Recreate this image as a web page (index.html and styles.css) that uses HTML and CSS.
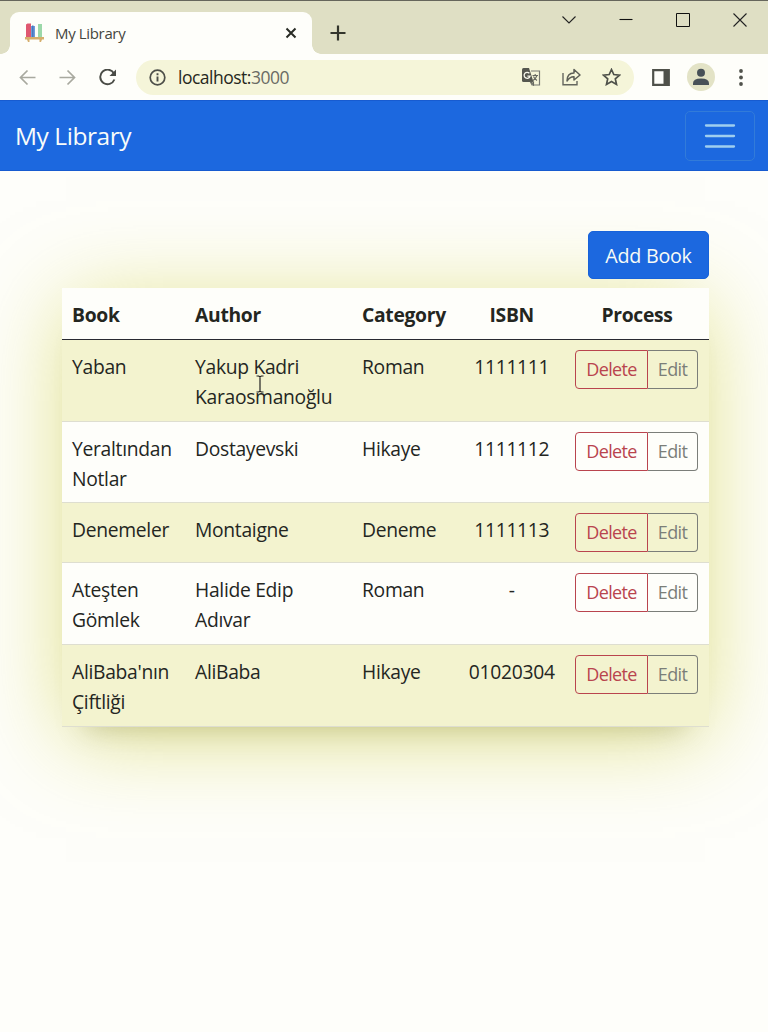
FILE: index.html
```html
<!DOCTYPE html>
<html lang="en">
<head>
<meta charset="utf-8">
<title>My Library</title>
<link rel="stylesheet" href="styles.css">
</head>
<body>
<header class="browser">
  <div class="tabstrip">
    <div class="tab">
      <svg class="favicon" width="20" height="20" viewBox="0 0 20 20"><path d="M1 1.500 2.500.5H6V14H1z" fill="#df5870"/><path d="M6 3h4v11H6z" fill="#6d9bdc"/><path d="M7 2.500h1.500V14H7z" fill="#4879bd"/><path d="M13 1h4v13h-4z" fill="#9bd8a9"/><path d="M0 14h19v2.500H0zM2 16.500h2.500V19H3zM14.500 16.500H17L16 19h-1.500z" fill="#d5ae6c"/></svg>
      <span class="tab-title">My Library</span>
      <svg width="12" height="12" viewBox="0 0 12 12"><path d="m1.500 1.500 9 9m0-9-9 9" stroke="#292c25" stroke-width="2"/></svg>
    </div>
    <svg class="new-tab" width="16" height="16" viewBox="0 0 16 16"><path d="M8 .5v15M.5 8h15" stroke="#33352c" stroke-width="2.200"/></svg>
    <div class="window-controls">
      <svg width="14" height="14" viewBox="0 0 14 14"><path d="m.5 3.500 6.500 6.500 6.500-6.500" fill="none" stroke="#222" stroke-width="1.100"/></svg>
      <svg width="14" height="14" viewBox="0 0 14 14"><path d="M.5 6.500h13" stroke="#111" stroke-width="1.100"/></svg>
      <svg width="14" height="14" viewBox="0 0 14 14"><path d="M.5.500h13v13H.5z" fill="none" stroke="#111"/></svg>
      <svg width="14" height="14" viewBox="0 0 14 14"><path d="m.5.500 13 13m0-13-13 13" stroke="#222" stroke-width="1.100"/></svg>
    </div>
  </div>
  <div class="toolbar">
    <div class="history">
      <svg width="17" height="17" viewBox="0 0 17 17"><path d="M16.500 8.500H1.500M8.500 1.500l-7 7 7 7" fill="none" stroke="#a8a99f" stroke-width="1.700"/></svg>
      <svg width="17" height="17" viewBox="0 0 17 17"><path d="M.5 8.500h15M8.500 1.500l7 7-7 7" fill="none" stroke="#a8a99f" stroke-width="1.700"/></svg>
      <svg width="17" height="17" viewBox="0 0 17 17"><path d="M15 4.500A7.300 7.300 0 1 0 15.400 10.500" fill="none" stroke="#4a4c46" stroke-width="1.900"/><path d="M17 .5v6.500h-6.500z" fill="#4a4c46"/></svg>
    </div>
    <div class="address">
      <svg width="17" height="17" viewBox="0 0 17 17"><circle cx="8.500" cy="8.500" r="7.300" fill="none" stroke="#4d4f49" stroke-width="1.700"/><path d="M8.500 7.500v5M8.500 4.300v1.900" stroke="#4d4f49" stroke-width="1.900"/></svg>
      <span class="url">localhost:<span>3000</span></span>
      <div class="address-actions">
        <svg width="19" height="18" viewBox="0 0 19 18"><path d="M9 3h8.500v14H10L8 13" fill="none" stroke="#777972" stroke-width="1.200"/><path d="M1.500 0H7l4.500 14h-10Q0 14 0 12.500v-11Q0 0 1.500 0z" fill="#55574f"/><path d="M7.400 5.300A3 3 0 1 0 8 8.200H5.400" fill="none" stroke="#f8f8ec" stroke-width="1.300"/><path d="M10.500 7.500H16M13.200 6v1.500M15 7.500q-1 3-4 5M11.500 8.500q1 2.500 3.500 4M9 14l2.500 3V14z" fill="none" stroke="#666860" stroke-width="1.100"/></svg>
        <svg width="19" height="18" viewBox="0 0 19 18"><path d="M1 5v11.700h14V13" fill="none" stroke="#65675f" stroke-width="1.400"/><path d="M5 13q0-8 7-8V1.500l6 5.500-6 5V8.800Q8 8.500 5 13z" fill="none" stroke="#5d5f57" stroke-width="1.500" stroke-linejoin="round"/></svg>
        <svg width="19" height="18" viewBox="0 0 19 18"><path d="m9.500 1.500 2.300 5 5.700.6-4.200 3.700 1.200 5.600-5-2.900-5 2.900 1.200-5.600-4.200-3.700 5.700-.6z" fill="none" stroke="#4f514a" stroke-width="1.700"/></svg>
      </div>
    </div>
    <div class="browser-actions">
      <svg width="18" height="17" viewBox="0 0 18 17"><path d="M1.200 1.200h15.600v14.600H1.200z" fill="none" stroke="#4f514a" stroke-width="2.200"/><path d="M11.500 1h5.500v15h-5.500z" fill="#4f514a"/></svg>
      <svg width="28" height="28" viewBox="0 0 28 28"><circle cx="14" cy="14" r="14" fill="#e3e3c6"/><circle cx="14" cy="9.700" r="4" fill="#475057"/><path d="M6 22v-1.800Q6 15.500 14 15.500t8 4.700V22z" fill="#475057"/></svg>
      <svg class="more" width="4" height="17" viewBox="0 0 4 17"><g fill="#50524c"><circle cx="2" cy="2" r="1.900"/><circle cx="2" cy="8.500" r="1.900"/><circle cx="2" cy="15" r="1.900"/></g></svg>
    </div>
  </div>
</header>
<nav class="navbar">
  <a class="brand">My Library</a>
  <button class="toggler" aria-label="Toggle navigation"><svg width="32" height="26" viewBox="0 0 32 26"><path d="M2 2.500h28M2 13h28M2 23.500h28" stroke="#9fceef" stroke-width="2.300" stroke-linecap="round"/></svg></button>
</nav>
<main class="content">
  <button class="add"><span>Add Book</span></button>
  <table class="books">
    <colgroup><col class="c-book"><col class="c-author"><col class="c-category"><col class="c-isbn"><col class="c-process"></colgroup>
    <thead><tr><th>Book</th><th>Author</th><th>Category</th><th class="center">ISBN</th><th class="center">Process</th></tr></thead>
    <tbody>
      <tr><td>Yaban</td><td class="pointed">Yakup Kadri<br>Karaosmanoğlu<svg class="cursor" width="8" height="18" viewBox="0 0 8 18"><path d="M.5 1h2.200L4 2l1.300-1h2.200M4 2v14M.5 17h2.200L4 16l1.300 1h2.200" fill="none" stroke="#222" stroke-width="1.200"/></svg></td><td>Roman</td><td class="center">1111111</td><td><div class="group"><button class="delete">Delete</button><button class="edit">Edit</button></div></td></tr>
      <tr><td>Yeraltından<br>Notlar</td><td>Dostayevski</td><td>Hikaye</td><td class="center">1111112</td><td><div class="group"><button class="delete">Delete</button><button class="edit">Edit</button></div></td></tr>
      <tr class="short"><td>Denemeler</td><td>Montaigne</td><td>Deneme</td><td class="center">1111113</td><td><div class="group"><button class="delete">Delete</button><button class="edit">Edit</button></div></td></tr>
      <tr class="tall"><td>Ateşten<br>Gömlek</td><td>Halide Edip<br>Adıvar</td><td>Roman</td><td class="center">-</td><td><div class="group"><button class="delete">Delete</button><button class="edit">Edit</button></div></td></tr>
      <tr><td>AliBaba'nın<br>Çiftliği</td><td>AliBaba</td><td>Hikaye</td><td class="center">01020304</td><td><div class="group"><button class="delete">Delete</button><button class="edit">Edit</button></div></td></tr>
    </tbody>
  </table>
</main>
</body>
</html>
```
FILE: styles.css
```css
* { box-sizing: border-box; }
body {
  margin: 0;
  height: 1032px;
  overflow: hidden;
  background: #fefefa;
  color: #24261f;
  font-family: "Open Sans", "Noto Sans", sans-serif;
}
svg { display: block; flex: none; }
button { font: inherit; margin: 0; padding: 0; background: none; }

.tabstrip {
  display: flex;
  height: 54px;
  padding-left: 10px;
  background: #dfdfc4;
  border-top: 1px solid #66665c;
}
.tab {
  position: relative;
  display: flex;
  align-items: center;
  width: 302px;
  height: 42px;
  margin-top: 11px;
  padding: 0 15px;
  background: #fefefa;
  border-radius: 9px 9px 0 0;
}
.tab::before, .tab::after {
  content: "";
  position: absolute;
  bottom: 0;
  width: 9px;
  height: 9px;
}
.tab::before { left: -9px; background: radial-gradient(circle at 0 0, transparent 8.500px, #fefefa 9px); }
.tab::after { right: -9px; background: radial-gradient(circle at 100% 0, transparent 8.500px, #fefefa 9px); }
.tab-title { flex: 1; margin: -1px 0 0 10px; font-size: 15px; letter-spacing: -0.35px; color: #45463f; }
.new-tab { margin: 24px 0 0 18px; }
.window-controls { display: flex; gap: 43px; margin: 12px 21px 0 auto; }

.toolbar { display: flex; align-items: center; height: 46px; }
.history { display: flex; gap: 23px; width: 136px; padding-left: 19px; }
.address {
  display: flex;
  align-items: center;
  width: 498px;
  height: 35px;
  padding: 0 13px;
  border-radius: 18px;
  background: #f5f5d9;
}
.url { margin-left: 12px; font-size: 17.500px; letter-spacing: -0.5px; color: #262820; }
.url span { color: #6a6b64; }
.address-actions { display: flex; gap: 21px; margin-left: auto; }
.browser-actions { display: flex; align-items: center; gap: 17px; margin-left: 18px; }
.more { margin-left: 7px; }

.navbar {
  display: flex;
  align-items: center;
  justify-content: space-between;
  height: 71px;
  padding: 0 13px 0 15px;
  background: #1c68df;
  border-top: 1px solid #175bd0;
  border-bottom: 1px solid #175bd0;
}
.brand { font-size: 24.500px; letter-spacing: -0.45px; color: #f8fcfa; }
.toggler {
  display: grid;
  place-items: center;
  width: 70px;
  height: 50px;
  border: 1px solid #327bd9;
  border-radius: 5px;
}

.content { display: flex; flex-direction: column; padding: 60px 59px 0 62px; }
.add {
  position: relative;
  z-index: 1;
  align-self: flex-end;
  width: 121px;
  height: 48px;
  border-radius: 5px;
  border: 1px solid #1762da;
  background: #1c68df;
  color: #f7fbf6;
  font-size: 19.700px;
  letter-spacing: -0.25px;
}
.books {
  width: 647px;
  margin-top: 9px;
  table-layout: fixed;
  border-collapse: separate;
  border-spacing: 0;
  background: #fefefa;
  font-size: 19.300px;
  letter-spacing: -0.3px;
  line-height: 30px;
  box-shadow: 0 12px 85px -4px rgba(195, 195, 20, .5), 0 25px 26px -24px rgba(110, 110, 100, .38);
}
.c-book { width: 123px; }
.c-author { width: 167px; }
.c-category { width: 106.500px; }
.c-isbn { width: 106.500px; }
.c-process { width: 144px; }
th { height: 52px; padding: 3px 10px 0; text-align: left; font-weight: 700; border-bottom: 1px solid #292a31; }
td { height: 81px; padding: 12px 0 0 10px; vertical-align: top; border-bottom: 1px solid #deded0; white-space: nowrap; }
.short td { height: 60px; }
.tall td { height: 82px; }
tbody tr:first-child td, tbody tr:last-child td { height: 82px; }
tbody tr:nth-child(odd) { background: #f3f3cf; }
tbody tr td.center, th.center { padding-left: 0; padding-right: 0; text-align: center; }
.pointed { position: relative; }
.cursor { position: absolute; left: 71px; top: 35px; }
.group { display: flex; width: 123px; height: 39px; margin-top: -2px; }
.group button { border: 1px solid; line-height: 37px; font-size: 18px; letter-spacing: -0.65px; }
.delete { width: 73px; border-radius: 4px 0 0 4px; color: #b9444e; }
.group .edit { flex: 1; border-left-width: 0; border-radius: 0 4px 4px 0; color: #7b7e79; }
```
